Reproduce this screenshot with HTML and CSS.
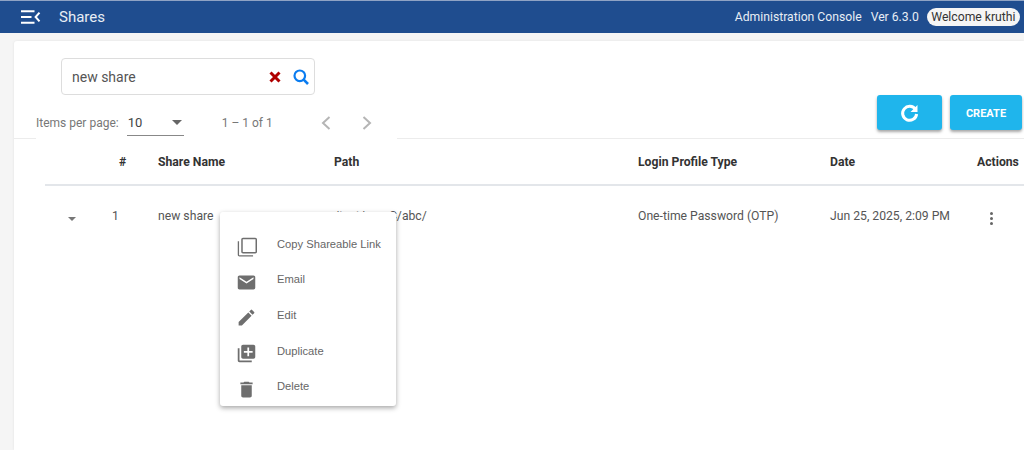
FILE: index.html
```html
<!DOCTYPE html>
<html>
<head>
  <title>Shares</title>
  <link rel="stylesheet" href="styles.css">
</head>
<body>
  <div class="top-bar">
    <svg class="menu-toggle" viewBox="0 0 20 14" width="20" height="14">
      <path d="M0 1.2h13.5M0 7h10.5M0 12.8h13.5" stroke="#fff" stroke-width="1.9" fill="none"/>
      <path d="M18.5 2.6L14.6 7l3.9 4.4" stroke="#fff" stroke-width="2" fill="none"/>
    </svg>
    <span class="page-title">Shares</span>
    <span class="top-right">Administration Console</span>
    <span class="version">Ver 6.3.0</span>
    <span class="welcome">Welcome kruthi</span>
  </div>

  <div class="card">
    <div class="toolbar">
      <div class="toolbar-left">
        <div class="search-box">
          <span class="search-text">new share</span>
          <svg class="clear-icon" viewBox="0 0 12 12" width="12" height="12">
            <path d="M1.5 1.5L10.5 10.5M10.5 1.5L1.5 10.5" stroke="#b00000" stroke-width="3" fill="none"/>
          </svg>
          <svg class="search-icon" viewBox="0 0 16 16" width="16" height="16">
            <circle cx="6.8" cy="6.8" r="5.3" stroke="#0a7cf0" stroke-width="2.2" fill="none"/>
            <path d="M10.7 10.7L15 15" stroke="#0a7cf0" stroke-width="2.6" fill="none"/>
          </svg>
        </div>
        <div class="pager">
          <span class="pager-label">Items per page:</span>
          <div class="pager-select">
            <span>10</span>
            <span class="select-arrow"></span>
          </div>
          <span class="pager-range">1 – 1 of 1</span>
          <svg class="pager-nav" viewBox="0 0 12 16" width="12" height="16"><path d="M9.5 2L3 8l6.5 6" stroke="#b5b5b5" stroke-width="2" fill="none"/></svg>
          <svg class="pager-nav" viewBox="0 0 12 16" width="12" height="16"><path d="M2.5 2L9 8l-6.500 6" stroke="#b5b5b5" stroke-width="2" fill="none"/></svg>
        </div>
      </div>
      <div class="toolbar-right">
        <button class="action-button refresh-button">
          <svg viewBox="0 0 24 24" width="24" height="24">
            <path d="M17.500 8.500A7 7 0 1 0 18.600 13" stroke="#fff" stroke-width="3" fill="none"/>
            <path d="M19.500 4V11h-7z" fill="#fff"/>
          </svg>
        </button>
        <button class="action-button create-button">CREATE</button>
      </div>
    </div>

    <div class="table">
      <div class="table-row table-head">
        <div></div>
        <div class="col-num">#</div>
        <div>Share Name</div>
        <div>Path</div>
        <div>Login Profile Type</div>
        <div>Date</div>
        <div>Actions</div>
      </div>
      <div class="table-row table-body">
        <div class="expand-cell"><span class="expand-arrow"></span></div>
        <div class="col-num">1</div>
        <div>new share</div>
        <div>/test/numC/abc/</div>
        <div>One-time Password (OTP)</div>
        <div>Jun 25, 2025, 2:09 PM</div>
        <div class="more-cell">
          <span class="more-dots"><i></i><i></i><i></i></span>
        </div>
      </div>
    </div>
  </div>

  <div class="row-menu">
    <div class="menu-item">
      <svg viewBox="0 0 24 24" width="21" height="21"><path d="M3.500 6H2v15.500c0 1.100.9 2 2 2h15.500V22H3.500zM22 2H8c-1.100 0-2 .9-2 2v14c0 1.100.9 2 2 2h14c1.100 0 2-.9 2-2V4c0-1.100-.9-2-2-2zm.300 16.300H7.700V3.700h14.600z"/></svg>
      <span>Copy Shareable Link</span>
    </div>
    <div class="menu-item">
      <svg viewBox="0 0 24 24" width="21" height="21"><path d="M20 4H4c-1.100 0-2 .9-2 2v12c0 1.100.9 2 2 2h16c1.100 0 2-.9 2-2V6c0-1.100-.9-2-2-2zm0 4l-8 5-8-5V6l8 5 8-5z"/></svg>
      <span>Email</span>
    </div>
    <div class="menu-item">
      <svg viewBox="0 0 24 24" width="21" height="21"><path d="M3 17.250V21h3.750L17.810 9.940l-3.750-3.750zM20.710 7.040a1 1 0 0 0 0-1.410l-2.340-2.340a1 1 0 0 0-1.410 0l-1.830 1.830 3.750 3.750z"/></svg>
      <span>Edit</span>
    </div>
    <div class="menu-item">
      <svg viewBox="0 0 24 24" width="21" height="21"><path d="M4 6H2v14c0 1.100.9 2 2 2h14v-2H4zm16-4H8c-1.100 0-2 .9-2 2v12c0 1.100.9 2 2 2h12c1.100 0 2-.9 2-2V4c0-1.100-.9-2-2-2zm-1 9h-4v4h-2v-4H9V9h4V5h2v4h4z"/></svg>
      <span>Duplicate</span>
    </div>
    <div class="menu-item">
      <svg viewBox="0 0 24 24" width="21" height="21"><path d="M6 19c0 1.100.9 2 2 2h8c1.100 0 2-.9 2-2V7H6zM19 4h-3.500l-1-1h-5l-1 1H5v2h14z"/></svg>
      <span>Delete</span>
    </div>
  </div>
</body>
</html>
```

FILE: styles.css
```css
body {
  font-family: Roboto, "Liberation Sans", sans-serif;
  background-color: #f5f5f5;
  margin: 0;
  padding: 0;
  height: 450px;
  overflow: hidden;
  color: #3c3c3c;
}

.top-bar {
  display: flex;
  align-items: center;
  height: 32px;
  background-color: #1f4d8f;
  border-top: 1px solid #8fa3c4;
  color: #e8edf5;
  font-size: 12.2px;
}

.menu-toggle {
  margin-left: 21px;
}

.page-title {
  margin-left: 18px;
  font-size: 15px;
  flex: 1;
}

.version {
  margin-left: 9px;
}

.welcome {
  margin: 0 4px 0 8px;
  padding: 2px 4.500px;
  background-color: #f5f5f5;
  border-radius: 10px;
  color: #333;
}

.card {
  margin: 8px 0 0 14px;
  height: 409px;
  background-color: #fff;
  border-radius: 3px 0 0 0;
  box-shadow: 0 0 3px rgba(0, 0, 0, 0.08);
}

.toolbar {
  display: flex;
  justify-content: space-between;
  align-items: flex-start;
  height: 98px;
  border-bottom: 1px solid #ececec;
  box-sizing: border-box;
  padding-top: 17px;
}

.toolbar-left {
  margin-left: 22px;
  background-color: #fff;
  height: 82px;
  padding-right: 24px;
}

.search-box {
  display: flex;
  align-items: center;
  width: 254px;
  height: 37px;
  margin-left: 25px;
  padding: 0 5px 0 10px;
  box-sizing: border-box;
  border: 1px solid #ddd;
  border-radius: 4px;
  font-size: 14px;
  color: #555;
}

.search-text {
  flex: 1;
}

.clear-icon {
  margin-right: 12px;
}

.pager {
  display: flex;
  align-items: center;
  margin-top: 15px;
  font-size: 12px;
  color: #777;
}

.pager-select {
  display: flex;
  justify-content: space-between;
  align-items: center;
  width: 57px;
  height: 26px;
  margin-left: 8px;
  padding: 0 1px;
  box-sizing: border-box;
  border-bottom: 1px solid #888;
  color: #444;
  font-size: 13px;
}

.select-arrow {
  margin-right: 1px;
  border-left: 5.500px solid transparent;
  border-right: 5.500px solid transparent;
  border-top: 5px solid #666;
}

.pager-range {
  margin: 0 47px 0 38px;
}

.pager-nav + .pager-nav {
  margin-left: 29px;
}

.toolbar-right {
  display: flex;
  gap: 8px;
  margin: 37px 2px 0 0;
}

.action-button {
  height: 35px;
  border: none;
  border-radius: 3px;
  background-color: #1fb5ec;
  color: #fff;
  box-shadow: 0 2px 3px rgba(0, 0, 0, 0.35);
  display: flex;
  align-items: center;
  justify-content: center;
  padding: 0;
  font-family: inherit;
}

.refresh-button {
  width: 65px;
}

.create-button {
  width: 72px;
  padding-top: 2px;
  font-size: 11px;
  font-weight: 700;
}

.table {
  margin-left: 31px;
}

.table-row {
  display: grid;
  grid-template-columns: 61px 52px 176px 304px 192px 147px 48px;
  font-size: 12.2px;
}

.table-head {
  height: 45px;
  align-items: center;
  border-bottom: 2px solid #e3e6ea;
  font-weight: 700;
  color: #333;
}

.table-head .col-num {
  padding-left: 13px;
}

.table-body {
  height: 59px;
  align-items: center;
  color: #555;
}

.col-num {
  padding-left: 6px;
}

.expand-cell {
  padding-left: 23px;
}

.expand-arrow {
  display: block;
  width: 0;
  margin-top: 7px;
  border-left: 4px solid transparent;
  border-right: 4px solid transparent;
  border-top: 4px solid #777;
}

.more-cell {
  padding-left: 13px;
}

.more-dots {
  display: flex;
  flex-direction: column;
  gap: 2px;
  margin-top: 5px;
}

.more-dots i {
  width: 3px;
  height: 3px;
  border-radius: 50%;
  background-color: #666;
}

.row-menu {
  position: absolute;
  left: 220px;
  top: 212px;
  width: 176px;
  height: 194px;
  padding-top: 16px;
  box-sizing: border-box;
  background-color: #fff;
  border-radius: 3px;
  box-shadow: 0 2px 5px rgba(0, 0, 0, 0.35);
  font-family: "Liberation Sans", Arial, sans-serif;
  font-size: 11.2px;
  color: #666;
}

.menu-item {
  display: flex;
  align-items: center;
  gap: 20px;
  height: 35.600px;
  padding-left: 16px;
}

.menu-item svg {
  fill: #6e6e6e;
  transform: translateY(1px);
  flex: none;
}

.menu-item span {
  transform: translateY(-2px);
}
```
